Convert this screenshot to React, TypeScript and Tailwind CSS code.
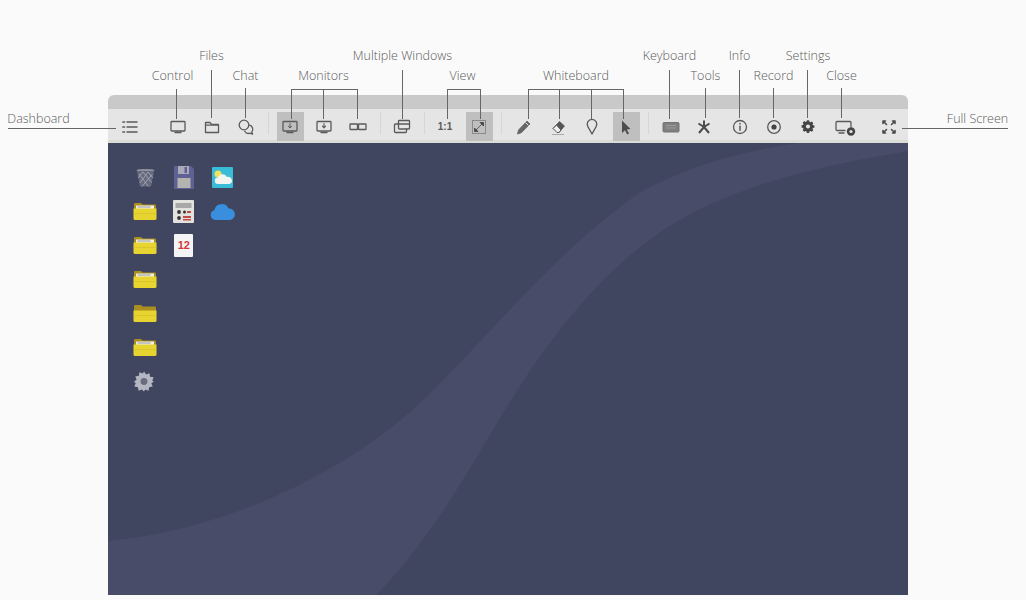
import React from "react";

const S = { fill: "none", stroke: "#5a5a5a", strokeWidth: 1.3, strokeLinecap: "round" as const, strokeLinejoin: "round" as const };

function Ico({ children, w = 20, h = 20 }: { children: React.ReactNode; w?: number; h?: number }) {
  return (
    <svg width={w} height={h} viewBox={`0 0 ${w} ${h}`}>
      {children}
    </svg>
  );
}

function Cell({ active, children, className = "" }: { active?: boolean; children: React.ReactNode; className?: string }) {
  return (
    <div className={`w-[34px] h-[29px] flex items-center justify-center shrink-0 ${className}`}>
      <div className={`w-[27px] h-[29px] flex items-center justify-center ${active ? "bg-[#bfbfbf]" : ""}`}>{children}</div>
    </div>
  );
}

function Sep() {
  return <div className="w-px h-[22px] bg-[#d6d6d6] ml-[5px] mr-[4px] shrink-0" />;
}

const Screen = ({ children }: { children?: React.ReactNode }) => (
  <Ico>
    <rect x="3" y="4.5" width="14" height="9.5" rx="0.8" {...S} />
    <path d="M7 15.5h6" {...S} />
    {children}
  </Ico>
);

function Toolbar() {
  return (
    <div className="h-[34px] bg-[#e5e5e5] border-b-[3px] border-[#dcdcd6] pl-[5px] pt-[3px] flex items-start">
      <Cell>
        <Ico>
          <path d="M7 5h10M7 10h10M7 15h10" {...S} strokeWidth={1.5} />
          <path d="M3 5h1.4M3 10h1.4M3 15h1.4" {...S} strokeWidth={1.7} />
        </Ico>
      </Cell>
      <Cell className="ml-[14px]">
        <Screen />
      </Cell>
      <Cell>
        <Ico>
          <path d="M3.5 15.5V5.5h4.5l1.5 1.8h7v8.2z M3.5 8.2h13" {...S} />
        </Ico>
      </Cell>
      <Cell>
        <Ico>
          <circle cx="8" cy="8" r="4.8" {...S} />
          <path d="M13.5 8.2a4.200 4.200 0 0 1 2.300 6.800l.8 2.200-2.800-1a4.200 4.200 0 0 1-5-2" {...S} />
        </Ico>
      </Cell>
      <Sep />
      <Cell active>
        <Screen>
          <path d="M10 6.5v4M8.4 9.2 10 11l1.6-1.8" {...S} strokeWidth={1} />
        </Screen>
      </Cell>
      <Cell>
        <Screen>
          <path d="M10 6.5v4M8.4 9.2 10 11l1.6-1.8" {...S} strokeWidth={1.1} />
        </Screen>
      </Cell>
      <Cell>
        <Ico>
          <rect x="2" y="7" width="7.5" height="5.5" rx="0.6" {...S} />
          <rect x="10.5" y="7" width="7.5" height="5.5" rx="0.6" {...S} />
        </Ico>
      </Cell>
      <Sep />
      <Cell>
        <Ico>
          <rect x="6.5" y="3.5" width="11" height="8.5" rx="0.8" {...S} />
          <path d="M6.5 7h11" {...S} />
          <path d="M6.5 7H3.5a1 1 0 0 0-1 1v6.5a1 1 0 0 0 1 1h10a1 1 0 0 0 1-1V12" {...S} />
        </Ico>
      </Cell>
      <Sep />
      <Cell className="ml-[-1px]">
        <span className="text-[10px] font-bold text-[#5a5a5a] [font-family:'Liberation_Sans',sans-serif]">1:1</span>
      </Cell>
      <Cell active>
        <Ico>
          <rect x="3.5" y="3.5" width="13" height="13" fill="none" strokeWidth={1} stroke="#8a8a8a" />
          <path d="M5.500 14.500v-3.500l3.500 3.500zM14.500 5.500v3.500L11 5.500zM7 13l6-6" fill="#444" stroke="#444" strokeWidth={0.8} />
        </Ico>
      </Cell>
      <Sep />
      <Cell className="ml-[1px]">
        <Ico>
          <path d="M3.500 17 4.500 13l8.500-9 3 3-8.700 8.800z" fill="#666" stroke="#666" strokeWidth={0.8} strokeLinejoin="round" />
          <path d="M11.500 5.500l3 3" stroke="#e5e5e5" strokeWidth={1} />
        </Ico>
      </Cell>
      <Cell>
        <Ico>
          <path d="M5 11.500 11.500 4.500l5 4.500-5.500 6.500" fill="#555" stroke="#555" strokeWidth={0.8} strokeLinejoin="round" />
          <path d="M5 11.500 9 15.500h2L13 13 8.500 8z" fill="#eee" stroke="#555" strokeWidth={1} strokeLinejoin="round" />
          <path d="M4 17.500h12" stroke="#aaa" strokeWidth={1} />
        </Ico>
      </Cell>
      <Cell>
        <Ico>
          <path d="M10 17 5.800 9.500a4.800 4.800 0 1 1 8.400 0z" {...S} strokeWidth={1.4} />
        </Ico>
      </Cell>
      <Cell active>
        <Ico>
          <path d="M6 3.500v12.500l3-2.800 2.200 4.300 1.800-.9-2.200-4.200 3.700-.4z" fill="#4d4d4d" />
        </Ico>
      </Cell>
      <Sep />
      <Cell className="ml-[1px]">
        <Ico>
          <rect x="2" y="5.500" width="16" height="9.500" rx="1" fill="#808080" stroke="#737373" />
          <path d="M5 8.500h10M5 11h10" stroke="#9c9c9c" strokeWidth={1} />
        </Ico>
      </Cell>
      <Cell className="ml-[-1px]">
        <Ico>
          <path d="M10 3.500V10M15.500 6.500 10 10M15 16 10 10M5 16 10 10M4.500 6.500 10 10" fill="none" stroke="#4a4a4a" strokeWidth={2} />
        </Ico>
      </Cell>
      <Cell className="ml-[2px]">
        <Ico>
          <circle cx="10" cy="10" r="6.500" {...S} />
          <path d="M10 9.200v4" {...S} strokeWidth={1.500} />
          <path d="M10 6.600v.5" {...S} strokeWidth={1.500} />
        </Ico>
      </Cell>
      <Cell>
        <Ico>
          <circle cx="10" cy="10" r="6.300" {...S} />
          <circle cx="10" cy="10" r="2.600" fill="#444" />
        </Ico>
      </Cell>
      <Cell>
        <Ico>
          <g transform="translate(1.600 1.100) scale(0.84)">
            <path d="M8.700 3.500h2.600l.4 1.700 1.300.6 1.500-.9 1.800 1.800-.9 1.500.5 1.300 1.800.4v2.400l-1.800.4-.5 1.300.9 1.500-1.800 1.800-1.500-.9-1.300.5-.4 1.800H8.700l-.4-1.800-1.300-.5-1.500.9-1.800-1.800.9-1.500-.5-1.300-1.800-.4V9.600l1.800-.4.5-1.300-.9-1.500 1.800-1.800 1.500.9 1.300-.6z" fill="#444" transform="translate(0 -1)" />
            <circle cx="10" cy="10" r="2.400" fill="#e5e5e5" />
          </g>
        </Ico>
      </Cell>
      <Cell className="ml-[3px]">
        <Ico w={24}>
          <path d="M12 13.500H4a1 1 0 0 1-1-1V5.500a1 1 0 0 1 1-1h13a1 1 0 0 1 1 1v4" {...S} />
          <path d="M6 16h5" {...S} />
          <circle cx="18" cy="14.500" r="4.200" fill="#444" />
          <circle cx="18" cy="14.500" r="1.600" fill="#e5e5e5" />
        </Ico>
      </Cell>
      <Cell className="ml-[10px]">
        <Ico>
          <path d="M4 4l3.500 3.500M4 4v2.500M4 4h2.500M16 4l-3.500 3.500M16 4v2.500M16 4h-2.500M4 16l3.500-3.500M4 16v-2.500M4 16h2.500M16 16l-3.500-3.500M16 16v-2.500M16 16h-2.500" {...S} stroke="#4a4a4a" strokeWidth={1.600} />
        </Ico>
      </Cell>
    </div>
  );
}

function Folder({ open = true }: { open?: boolean }) {
  return (
    <svg width="24" height="19" viewBox="0 0 24 19">
      <path d="M1 2a1 1 0 0 1 1-1h6l1.500 1.500H22a1 1 0 0 1 1 1V8H1z" fill="#a98e20" />
      {open && <rect x="3" y="3.500" width="18" height="3.500" fill="#efefe4" />}
      {open && <path d="M4.500 5h13" stroke="#888" strokeWidth={0.8} />}
      <path d="M0.500 6.500h23v10a1.500 1.500 0 0 1-1.500 1.500H2a1.500 1.500 0 0 1-1.500-1.500z" fill="#e7d431" />
      <path d="M.5 11.500h23" stroke="#d6c22d" strokeWidth={0.7} />
    </svg>
  );
}

function Trash() {
  return (
    <svg width="19" height="19" viewBox="0 0 19 19">
      <ellipse cx="9.500" cy="2.500" rx="9" ry="1.600" fill="#8e92a0" />
      <path d="M1 3 4 18.500h11L18 3z" fill="#666a7e" />
      <path d="M3 6l9.500 12.500M7 4l8.500 10.500M12 4l5 6M16.500 6 6 18.500M12 4 3.800 15M7 4 2 10" stroke="#a3a6b2" strokeWidth={0.9} />
    </svg>
  );
}

function Floppy() {
  return (
    <svg width="20" height="23" viewBox="0 0 20 23">
      <path d="M0 0h17l3 3v20H0z" fill="#5f6094" />
      <rect x="4" y="0" width="11" height="8" fill="#a9a9b9" />
      <rect x="10.500" y="1" width="2.500" height="6" fill="#5f6094" />
      <rect x="3.500" y="12" width="13" height="10" fill="#b3b3b0" />
    </svg>
  );
}

function Weather() {
  return (
    <svg width="21" height="21" viewBox="0 0 21 21">
      <rect width="21" height="21" rx="1" fill="#38bcd8" />
      <circle cx="6" cy="7" r="3.500" fill="#f3e25a" />
      <path d="M6 17a3.200 3.200 0 0 1 0-6.400 4.800 4.800 0 0 1 9-.5 3.500 3.500 0 0 1 2.500 6.900z" fill="#f1f4ef" />
    </svg>
  );
}

function Calc() {
  return (
    <svg width="21" height="23" viewBox="0 0 21 23">
      <rect width="21" height="23" rx="1" fill="#e2e2de" />
      <rect x="2.500" y="3" width="16" height="5" fill="#a8a8a8" />
      <circle cx="6" cy="12" r="1.900" fill="#333" />
      <circle cx="6" cy="18" r="1.900" fill="#333" />
      <circle cx="11.500" cy="12" r="1.500" fill="#333" />
      <path d="M10 16h8v2h-8zM14 11h4v2h-4zM10 19h8v1.500h-8z" fill="#c44a44" />
    </svg>
  );
}

function Gear() {
  return (
    <svg width="20" height="21" viewBox="0 0 22 22" className="mr-[3px]">
      <path d="M11 0l2.300 3.300 3.700-1.500.6 4 4 .6-1.500 3.700L22 11l-2.900 1.900 1.500 3.700-4 .6-.6 4-3.700-1.500L11 22l-2.300-2.300-3.700 1.500-.6-4-4-.6 1.500-3.700L0 11l2.900-1.900-1.500-3.700 4-.6.6-4 3.700 1.500z" fill="#b4b7c2" />
      <circle cx="11" cy="11" r="3.800" fill="#686c7e" />
    </svg>
  );
}

function DeskCell({ children }: { children?: React.ReactNode }) {
  return <div className="w-[38.500px] h-[34px] flex items-center justify-center">{children}</div>;
}

function Desktop() {
  return (
    <div className="relative h-[452px] bg-[#404560] overflow-hidden">
      <svg className="absolute inset-0" width="800" height="452" viewBox="0 0 800 452">
        <path
          d="M0 398C110 388 230 335 310 262C385 190 440 115 531 50C590 18 640 8 690 0H800V8C720 22 640 38 570 78C490 125 430 210 380 295C345 355 310 410 268 452H0Z"
          fill="#484c68"
        />
      </svg>
      <div className="relative pl-[18px] pt-[17px] flex">
        <div className="flex flex-col">
          <DeskCell><Trash /></DeskCell>
          <DeskCell><Folder /></DeskCell>
          <DeskCell><Folder /></DeskCell>
          <DeskCell><Folder /></DeskCell>
          <DeskCell><Folder open={false} /></DeskCell>
          <DeskCell><Folder /></DeskCell>
          <DeskCell><Gear /></DeskCell>
        </div>
        <div className="flex flex-col">
          <DeskCell><Floppy /></DeskCell>
          <DeskCell><Calc /></DeskCell>
          <DeskCell>
            <div className="w-[19px] h-[23px] bg-[#f4f4f4] rounded-[1px] flex items-center justify-center text-[11px] font-bold text-[#d23a3a] [font-family:'Liberation_Sans',sans-serif]">
              12
            </div>
          </DeskCell>
        </div>
        <div className="flex flex-col">
          <DeskCell><Weather /></DeskCell>
          <DeskCell>
            <svg width="27" height="17" viewBox="0 0 26 17">
              <path d="M6 17a5 5 0 0 1-1.200-9.800A7.500 7.500 0 0 1 19 5.500 5.800 5.800 0 0 1 20.500 17z" fill="#3a8ede" />
            </svg>
          </DeskCell>
        </div>
      </div>
    </div>
  );
}

const lab = "absolute whitespace-nowrap -translate-x-1/2 text-[12.500px] leading-[16px] font-light text-[#5a5a5a] [font-family:'Open_Sans',sans-serif]";
const v = "absolute w-px bg-[#666]";
const h = "absolute h-px bg-[#666]";

export default function App() {
  return (
    <div className="relative w-[1026px] h-[600px] overflow-hidden bg-[#fafafa] pt-[95px]">
      <div className="ml-[108px] w-[800px]">
        <div className="h-[14px] bg-[#c9c9c9] rounded-t-[6px]" />
        <Toolbar />
        <Desktop />
      </div>

      <span className={`${lab} left-[38.500px] top-[111px]`}>Dashboard</span>
      <span className={`${lab} left-[172.500px] top-[68px]`}>Control</span>
      <span className={`${lab} left-[211.500px] top-[48px]`}>Files</span>
      <span className={`${lab} left-[245.500px] top-[68px]`}>Chat</span>
      <span className={`${lab} left-[323.500px] top-[68px]`}>Monitors</span>
      <span className={`${lab} left-[402.500px] top-[48px]`}>Multiple Windows</span>
      <span className={`${lab} left-[462.500px] top-[68px]`}>View</span>
      <span className={`${lab} left-[576px] top-[68px]`}>Whiteboard</span>
      <span className={`${lab} left-[669.500px] top-[48px]`}>Keyboard</span>
      <span className={`${lab} left-[705.500px] top-[68px]`}>Tools</span>
      <span className={`${lab} left-[739.500px] top-[48px]`}>Info</span>
      <span className={`${lab} left-[773.500px] top-[68px]`}>Record</span>
      <span className={`${lab} left-[808px] top-[48px]`}>Settings</span>
      <span className={`${lab} left-[841.500px] top-[68px]`}>Close</span>
      <span className={`${lab} left-[977.500px] top-[111px]`}>Full Screen</span>

      <div className={`${h} left-[8px] top-[128px] w-[108px]`} />
      <div className={`${h} left-[902px] top-[128px] w-[106px]`} />

      <div className={`${v} left-[176px] top-[89px] h-[30px]`} />
      <div className={`${v} left-[211px] top-[70px] h-[48px]`} />
      <div className={`${v} left-[245px] top-[88px] h-[30px]`} />

      <div className={`${h} left-[291px] top-[89px] w-[67px]`} />
      <div className={`${v} left-[291px] top-[89px] h-[30px]`} />
      <div className={`${v} left-[323px] top-[89px] h-[30px]`} />
      <div className={`${v} left-[357px] top-[89px] h-[30px]`} />

      <div className={`${v} left-[402px] top-[70px] h-[49px]`} />

      <div className={`${h} left-[447px] top-[89px] w-[34px]`} />
      <div className={`${v} left-[447px] top-[89px] h-[30px]`} />
      <div className={`${v} left-[480px] top-[89px] h-[30px]`} />

      <div className={`${h} left-[528px] top-[89px] w-[96px]`} />
      <div className={`${v} left-[528px] top-[89px] h-[30px]`} />
      <div className={`${v} left-[559px] top-[89px] h-[30px]`} />
      <div className={`${v} left-[591px] top-[89px] h-[30px]`} />
      <div className={`${v} left-[623px] top-[89px] h-[30px]`} />

      <div className={`${v} left-[669px] top-[70px] h-[49px]`} />
      <div className={`${v} left-[705px] top-[88px] h-[30px]`} />
      <div className={`${v} left-[739px] top-[70px] h-[48px]`} />
      <div className={`${v} left-[773px] top-[88px] h-[30px]`} />
      <div className={`${v} left-[807px] top-[70px] h-[48px]`} />
      <div className={`${v} left-[841px] top-[88px] h-[30px]`} />
    </div>
  );
}
